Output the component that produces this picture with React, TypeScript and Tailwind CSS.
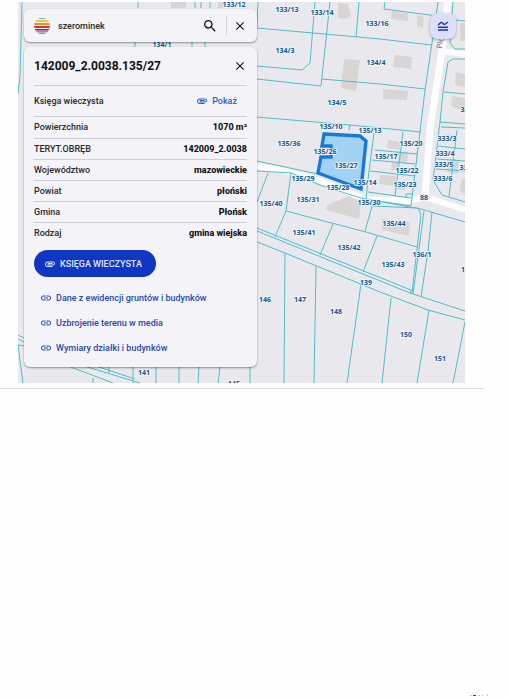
import React from 'react';
import { MdAttachment, MdClose, MdLink, MdSearch } from 'react-icons/md';

const details = [
  { label: 'Powierzchnia', value: '1070 m²' },
  { label: 'TERYT.OBRĘB', value: '142009_2.0038' },
  { label: 'Województwo', value: 'mazowieckie' },
  { label: 'Powiat', value: 'płoński' },
  { label: 'Gmina', value: 'Płońsk' },
  { label: 'Rodzaj', value: 'gmina wiejska' },
];

const links = [
  'Dane z ewidencji gruntów i budynków',
  'Uzbrojenie terenu w media',
  'Wymiary działki i budynków',
];

const parcels: [string, number, number][] = [
  ['133/12', 234, 7],
  ['133/13', 287, 12],
  ['133/14', 322, 15],
  ['133/16', 377, 26],
  ['134/1', 162, 47],
  ['134/3', 285, 53],
  ['134/4', 376, 65],
  ['134/5', 337, 105],
  ['135/10', 331, 129],
  ['135/13', 370, 133],
  ['135/36', 289, 146],
  ['135/26', 325, 154],
  ['135/27', 346, 168],
  ['135/17', 386, 159],
  ['135/20', 411, 146],
  ['135/22', 407, 173],
  ['135/23', 405, 187],
  ['135/14', 365, 185],
  ['135/28', 338, 190],
  ['135/29', 303, 181],
  ['135/30', 369, 205],
  ['135/31', 308, 202],
  ['135/40', 271, 206],
  ['135/41', 304, 235],
  ['135/42', 349, 250],
  ['135/43', 393, 267],
  ['135/44', 394, 226],
  ['136/1', 422, 257],
  ['333/3', 447, 141],
  ['333/4', 445, 156],
  ['333/5', 444, 167],
  ['333/6', 443, 181],
  ['333/7', 469, 170],
  ['332/1', 470, 112],
  ['137', 467, 272],
  ['88', 424, 200],
  ['139', 366, 285],
  ['146', 265, 302],
  ['147', 300, 302],
  ['148', 336, 314],
  ['150', 406, 337],
  ['151', 440, 361],
  ['141', 144, 375],
  ['145', 234, 386],
];

const boundaries = [
  // north-west blocks
  'M22 2L20 76L18 94M138 2V8M192 42V48M205 42V48M135 42V48M195 2V8M201 2V8M210 2V8',
  'M258 2L257 28L380 39L431 45M315 2L310 63L302 70L257 66',
  'M330 2L321 86L257 79M322 79L380 84L425 89M359 2L356 37',
  'M385 2L384 9L437 16M257 117L350 125L349 130M350 125L421 132',
  // street on the east side
  'M438 2L432 43L425 90L411 206M453 2L450 43L455 49H465M455 20L465 21',
  'M465 59H453L448 62L443 92L440 122L433 180L442 195L465 202',
  'M444 92L465 94M440 122L465 124M441 127L465 128M438 146L465 149M437 159L465 161M436 169L465 171M457 130L449 197',
  // small lots
  'M374 133L369 171L366 199M375 150L417 154M403 132L395 196M372 160L415 164M370 171L415 176M368 192L411 198M406 198V194H412',
  // lots south of the road
  'M257 161L318 174M257 171L291 173L320 185L361 198L421 209L465 222',
  'M291 173L286 211L275 237M268 173L257 202M286 211L366 232L417 247M373 203L365 231M333 224L320 255M377 236L363 272',
  'M366 199L411 206M373 206L418 208L421 214L412 293M424 211L413 294M432 212L428 251L421 297',
  // canal
  'M257 231L410 293L465 311M257 228L411 290L410 293M257 242L285 253L380 292L428 310L465 320',
  'M285 253L284 383M316 266L314 383M361 284L347 383M391 298L382 383M429 310L417 383M465 322L453 383',
  // below the panel
  'M18 335L24 338M18 339L24 342M18 345L24 346M18 345L23 383M68 366L113 383M84 366L140 383M96 366L135 379M93 378V383M109 367V373M133 367V383M156 367V383M179 367V383M199 367L198 383M220 367L218 383M250 367V383',
];

const buildings =
  'M338 3L348 4L351 16L346 19L338 18ZM344 59L360 60L356 91L341 88ZM171 2H186V8H171ZM218 2H226V8H218ZM392 11L408 13V21L391 19ZM417 15L424 17L423 28L417 26ZM395 55L412 57L411 69L393 67ZM383 89L408 91L407 100L383 99ZM460 23H465V41H460ZM456 72L465 74V87L455 85ZM452 96L465 98V110H460L451 106ZM388 140L401 142L400 150L387 148ZM399 151L408 152L407 164L398 162ZM392 161L399 162V170H391ZM380 175L396 176L395 186L379 184ZM394 182L406 183L405 190L394 189ZM327 205L350 196L361 203L359 219L326 210ZM382 219L410 222L409 236L382 230ZM450 158L459 160L458 174L446 172ZM461 180L465 178V195L460 191ZM445 134L455 135L454 142L445 141Z';

const Cadastre = () => (
  <svg
    className="absolute inset-0 h-full w-full"
    viewBox="18 2 447 381"
    preserveAspectRatio="xMinYMin slice"
    aria-label="Mapa działek"
  >
    <rect x="18" y="2" width="900" height="900" fill="#e9e9ed" />
    <path d={buildings} fill="#d8d5d4" />
    {/* Roads */}
    <g fill="none" stroke="#fdfdfd">
      <path d="M448 0L442 50L430 130L425 196" strokeWidth="7" />
      <path d="M440 51L465 54" strokeWidth="6" />
      <path d="M250 165L285 171L318 180L365 199L410 201L425 197L465 210" strokeWidth="6" />
    </g>
    <path d={boundaries.join('')} fill="none" stroke="#4fbdca" strokeWidth="1" />
    {/* Selected parcel */}
    <path
      d="M324 134L360 136L366 141L361 189L318 173L321 157H331V146H322Z"
      fill="#a3d3f4"
      stroke="#187ad8"
      strokeWidth="3.4"
    />
    <text
      x="442"
      y="49"
      transform="rotate(-80 442 49)"
      fontFamily="'Open Sans', sans-serif"
      fontSize="8"
      fill="#6d655f"
    >
      Pło
    </text>
    <g
      fontFamily="'Open Sans', 'Noto Sans', sans-serif"
      fontSize="7"
      fontWeight="700"
      textAnchor="middle"
      fill="#0f5799"
      stroke="#f3f6fa"
      strokeWidth="1.6"
      paintOrder="stroke"
    >
      {parcels.map(([name, x, y]) => (
        <text key={name} x={x} y={y}>
          {name}
        </text>
      ))}
    </g>
  </svg>
);

const Logo = () => (
  <svg className="h-4 w-4 shrink-0" viewBox="0 0 16 16" aria-hidden="true">
    <clipPath id="disc">
      <circle cx="8" cy="8" r="8" />
    </clipPath>
    <g clipPath="url(#disc)">
      <rect y="0" width="16" height="1" fill="#4fae9c" />
      <rect y="2" width="16" height="2" fill="#f3c437" />
      <rect y="5" width="16" height="2" fill="#f08a2c" />
      <rect y="8" width="16" height="2" fill="#da332c" />
      <rect y="11" width="16" height="1.6" fill="#8f2675" />
      <rect y="13.4" width="16" height="1" fill="#5c4ca0" />
      <rect y="15" width="16" height="1" fill="#3f9ad0" />
    </g>
  </svg>
);

const SearchBar = () => (
  <form className="flex h-[33px] items-center rounded-md bg-[#f4f3f8] px-2.5 shadow-[0_1px_2px_rgba(0,0,0,0.4)]">
    <Logo />
    <input
      aria-label="Szukaj"
      defaultValue="szerominek"
      className="ml-2 w-0 min-w-0 flex-1 bg-transparent text-[9px] font-medium text-[#29292d] outline-none"
    />
    <button type="button" aria-label="Szukaj działki" className="text-[#16161a]">
      <MdSearch size={16} />
    </button>
    <span className="mr-1.5 ml-2 h-[18px] w-px bg-[#d5d4db]" />
    <button type="button" aria-label="Wyczyść" className="text-[#16161a]">
      <MdClose size={14} />
    </button>
  </form>
);

const ParcelPanel = () => (
  <section className="rounded-md bg-[#f4f3f8] px-2.5 pb-[7px] shadow-[0_1px_2px_rgba(0,0,0,0.4)]">
    <div className="flex h-[39px] items-center justify-between border-b border-[#cfced6]">
      <h1 className="text-[12px] font-bold text-[#101014]">142009_2.0038.135/27</h1>
      <button type="button" aria-label="Zamknij" className="text-[#16161a]">
        <MdClose size={14} />
      </button>
    </div>
    <div className="flex h-[31px] items-center justify-between border-b border-[#cfced6] pr-2.5">
      <span>Księga wieczysta</span>
      <a href="#pokaz" className="flex items-center gap-1 text-[#2f5cc4]">
        <MdAttachment size={12} />
        Pokaż
      </a>
    </div>
    <table className="w-full border-collapse">
      <tbody>
        {details.map((row) => (
          <tr key={row.label} className="h-[21px] border-b border-[#cfced6] last:border-b-0">
            <th scope="row" className="p-0 text-left font-medium">
              {row.label}
            </th>
            <td className="p-0 text-right font-extrabold text-[#101014]">{row.value}</td>
          </tr>
        ))}
      </tbody>
    </table>
    <button
      type="button"
      className="mt-[7px] flex h-[27px] items-center gap-1 rounded-full bg-[#1236c4] pr-3.5 pl-2.5 text-[#dfe6fb]"
    >
      <MdAttachment size={12} />
      KSIĘGA WIECZYSTA
    </button>
    <ul className="mt-2 pl-1.5">
      {links.map((text) => (
        <li key={text} className="flex h-[25px] items-center">
          <a href="#dane" className="flex items-center gap-1 text-[#2549b4]">
            <MdLink size={12} />
            {text}
          </a>
        </li>
      ))}
    </ul>
  </section>
);

export default function App() {
  return (
    <div className="flex min-h-screen flex-col bg-[#fefefe] pt-0.5 font-['Roboto',sans-serif] text-[9px] leading-3 font-medium text-[#29292d]">
      <main className="relative mr-[43px] ml-[18px] overflow-hidden pt-[7px] pr-[9px] pb-4 pl-1.5">
        <Cadastre />
        <div className="relative flex items-start justify-between">
          <div className="flex w-[233px] flex-col gap-[5px]">
            <SearchBar />
            <ParcelPanel />
          </div>
          <button
            type="button"
            aria-label="Warstwy"
            className="mt-1 flex h-[26px] w-[26px] items-center justify-center rounded-lg bg-[#dcdffa] shadow-[0_1px_3px_rgba(0,0,0,0.3)]"
          >
            <svg width="12" height="10" viewBox="0 0 12 10" fill="none" stroke="#1737b5" strokeWidth="1.4">
              <path d="M1 4L3.8 1.6Q4.4 1.2 5 1.6L6.8 3.2Q7.4 3.6 8 3.2L11 1" />
              <path d="M1 6.2H11M1 9H11" />
            </svg>
          </button>
        </div>
      </main>
      <hr className="mt-[5px] mr-[23px] border-[#dcdcdc]" />
      <footer className="mt-auto flex justify-end pr-4 pb-0.5">
        {/* Paper specks */}
        <svg width="22" height="3" viewBox="0 0 22 3" aria-hidden="true">
          <path d="M0 1H2V2H0ZM8 1H10V2H8ZM12 1H13V2H12ZM17 0H18V2H17Z" fill="#c4c4c4" />
          <path d="M3 1H6V2H3Z" fill="#444444" />
        </svg>
      </footer>
    </div>
  );
}
